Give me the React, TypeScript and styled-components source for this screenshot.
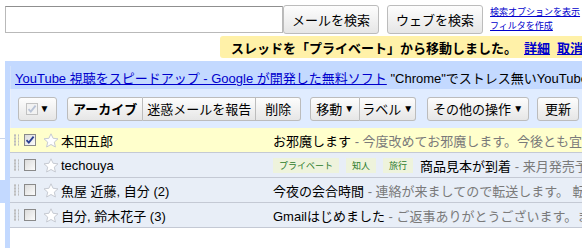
import React from 'react';
import styled, { createGlobalStyle } from 'styled-components';

const GlobalStyle = createGlobalStyle`
  body {
    margin: 0;
    background: #fff;
    font-family: "Liberation Sans", "Noto Sans CJK JP", sans-serif;
    font-size: 13px;
    color: #000;
    overflow: hidden;
  }
`;

const Page = styled.div`
  width: 582px;
  height: 248px;
  overflow: hidden;
`;

const TopBar = styled.div`
  display: flex;
  align-items: center;
  padding: 4px 0 0 5px;
  height: 30px;
`;

const SearchInput = styled.input`
  flex: none;
  width: 278px;
  height: 27px;
  box-sizing: border-box;
  border: 1px solid #b9b9b9;
  border-top-color: #8f8f8f;
  margin: 0;
`;

const Button = styled.button<{ $bold?: boolean; $pos?: 'left' | 'mid' | 'right'; $px?: string }>`
  display: inline-flex;
  align-items: center;
  justify-content: center;
  flex: none;
  box-sizing: border-box;
  height: 24px;
  padding: 0 ${(p) => p.$px ?? '6px'};
  margin: 0;
  font-family: inherit;
  font-size: 13px;
  font-weight: ${(p) => (p.$bold ? 'bold' : 'normal')};
  color: #000;
  white-space: nowrap;
  background: linear-gradient(#fdfdfd, #e6e6e6);
  border: 1px solid #bcbcbc;
  border-radius: ${(p) =>
    p.$pos === 'left' ? '3px 0 0 3px' : p.$pos === 'mid' ? '0' : p.$pos === 'right' ? '0 3px 3px 0' : '3px'};
  ${(p) => (p.$pos === 'mid' || p.$pos === 'right' ? 'border-left: none;' : '')}
`;

const SearchButton = styled(Button)`
  height: 29px;
  padding: 0 8px;
  font-size: 13px;
  margin-left: 0;
  & + & {
    margin-left: 8px;
  }
`;

const SearchLinks = styled.div`
  display: flex;
  flex-direction: column;
  gap: 3px;
  margin-left: 7px;
  font-size: 9px;
  line-height: 11px;
  white-space: nowrap;
`;

const Link = styled.a<{ $bold?: boolean }>`
  color: #0000cc;
  text-decoration: underline;
  font-weight: ${(p) => (p.$bold ? 'bold' : 'normal')};
`;

const NoticeRow = styled.div`
  display: flex;
  justify-content: flex-end;
  margin-top: 2px;
  height: 22px;
`;

const Notice = styled.div`
  display: flex;
  align-items: center;
  gap: 7px;
  width: 362px;
  box-sizing: border-box;
  padding: 0 0 0 11px;
  background: #fff1a8;
  border-radius: 3px 0 0 3px;
  font-weight: bold;
  font-size: 13px;
  white-space: nowrap;
  overflow: hidden;
`;

const Content = styled.div`
  display: flex;
  margin-top: 3px;
`;

const LeftNav = styled.div`
  width: 5px;
  flex: none;
  display: flex;
  flex-direction: column;
`;

const NavLine = styled.div<{ $top: number }>`
  margin-top: ${(p) => p.$top}px;
  height: 1px;
  background: #c8d4ec;
`;

const NavBlock = styled.div<{ $top: number }>`
  margin-top: ${(p) => p.$top}px;
  height: 23px;
  background: #c3d9ff;
`;

const Main = styled.div`
  flex: 1;
  min-width: 0;
  border-left: 5px solid #c3d9ff;
  height: 190px;
`;

const AdLine = styled.div`
  background: #c3d9ff;
  padding: 5px 0 0;
`;

const AdText = styled.div`
  height: 23px;
  display: flex;
  align-items: center;
  padding-left: 4px;
  border-left: 1px solid #d3e2fb;
  white-space: nowrap;
  overflow: hidden;
  font-size: 13px;
`;

const Toolbar = styled.div`
  display: flex;
  align-items: center;
  height: 39px;
  padding-left: 7px;
  background: #e0ecff;
  border-left: 1px solid #e8effb;
  white-space: nowrap;
  overflow: hidden;
`;

const Group = styled.div<{ $gap?: number }>`
  display: flex;
  margin-right: ${(p) => p.$gap ?? 9}px;
  flex: none;
`;

const Arrow = styled.span`
  font-size: 10px;
  margin-left: 2px;
`;

const Row = styled.div<{ $selected?: boolean }>`
  display: flex;
  align-items: center;
  height: 24px;
  border-bottom: 1px solid #c4c9d4;
  background: ${(p) => (p.$selected ? '#ffffcc' : '#e8eef7')};
  white-space: nowrap;
  overflow: hidden;
`;

const Handle = styled.div`
  width: 6px;
  height: 12px;
  margin-left: 3px;
  flex: none;
  background-image: radial-gradient(#bdbdbd 50%, transparent 51%);
  background-size: 4px 3px;
`;

const Box = styled.span<{ $faded?: boolean }>`
  position: relative;
  display: inline-block;
  box-sizing: border-box;
  width: 12px;
  height: 12px;
  flex: none;
  border: 1px solid ${(p) => (p.$faded ? '#c2c2c2' : '#8a8a8a')};
  background: ${(p) => (p.$faded ? '#f2f2f2' : 'linear-gradient(135deg, #dcdcdc, #fbfbfb)')};
`;

const RowBox = styled(Box)`
  margin-left: 5px;
`;

const Sender = styled.div`
  width: 212px;
  flex: none;
  padding-left: 2px;
  font-size: 13px;
`;

const Subject = styled.div`
  display: flex;
  align-items: center;
  font-size: 13px;
`;

const Snippet = styled.span`
  color: #7a7a7a;
`;

const Label = styled.span`
  display: inline-flex;
  align-items: center;
  flex: none;
  height: 15px;
  padding: 0 6px;
  margin-right: 7px;
  background: #eef3dc;
  color: #2a7a2a;
  font-size: 9px;
`;

const Check = ({ color }: { color: string }) => (
  <svg width="10" height="10" viewBox="0 0 10 10" style={{ position: 'absolute', left: 0, top: 0 }}>
    <path d="M1.5 5.2 L3.8 7.6 L8.6 1.6" fill="none" stroke={color} strokeWidth="1.8" />
  </svg>
);

const Star = () => (
  <svg width="16" height="15" viewBox="0 0 16 15" style={{ marginLeft: 7, flex: 'none' }}>
    <path
      d="M8 0.8 L10.1 5.3 L15 5.8 L11.3 9.1 L12.4 14 L8 11.5 L3.6 14 L4.7 9.1 L1 5.8 L5.9 5.3 Z"
      fill="#fff"
      stroke="#c6cad2"
      strokeWidth="1"
    />
  </svg>
);

type Mail = {
  sender: string;
  subject: string;
  snippet: string;
  labels?: string[];
  selected?: boolean;
};

const mails: Mail[] = [
  { sender: '本田五郎', subject: 'お邪魔します', snippet: '今度改めてお邪魔します。今後とも宜しくお願いします', selected: true },
  { sender: 'techouya', subject: '商品見本が到着', snippet: '来月発売予定の商品', labels: ['プライベート', '知人', '旅行'] },
  { sender: '魚屋 近藤, 自分 (2)', subject: '今夜の会合時間', snippet: '連絡が来ましてので転送します。 転送' },
  { sender: '自分, 鈴木花子 (3)', subject: 'Gmailはじめました', snippet: 'ご返事ありがとうございます。まず' },
];

const App: React.FC = () => {
  return (
    <Page>
      <GlobalStyle />
      <TopBar>
        <SearchInput />
        <SearchButton>メールを検索</SearchButton>
        <SearchButton>ウェブを検索</SearchButton>
        <SearchLinks>
          <Link>検索オプションを表示</Link>
          <Link>フィルタを作成</Link>
        </SearchLinks>
      </TopBar>
      <NoticeRow>
        <Notice>
          <span>スレッドを「プライベート」から移動しました。</span>
          <Link $bold>詳細</Link>
          <Link $bold>取消</Link>
        </Notice>
      </NoticeRow>
      <Content>
        <LeftNav>
          <NavLine $top={77} />
          <NavBlock $top={41} />
        </LeftNav>
        <Main>
          <AdLine>
            <AdText>
              <Link>YouTube 視聴をスピードアップ - Google が開発した無料ソフト</Link>
              &nbsp;"Chrome"でストレス無いYouTube視聴を
            </AdText>
          </AdLine>
          <Toolbar>
            <Group $gap={10}>
              <Button style={{ width: 39, padding: 0 }}>
                <Box $faded>
                  <Check color="#b9c3d6" />
                </Box>
                <Arrow>▼</Arrow>
              </Button>
            </Group>
            <Group>
              <Button $bold $pos="left" $px="5px">アーカイブ</Button>
              <Button $pos="mid" $px="4px">迷惑メールを報告</Button>
              <Button $pos="right" $px="9px">削除</Button>
            </Group>
            <Group $gap={11}>
              <Button $pos="left" $px="5px">移動<Arrow>▼</Arrow></Button>
              <Button $pos="right" $px="2px">ラベル<Arrow>▼</Arrow></Button>
            </Group>
            <Group $gap={8}>
              <Button $px="5px">その他の操作<Arrow>▼</Arrow></Button>
            </Group>
            <Group>
              <Button $px="7px">更新</Button>
            </Group>
          </Toolbar>
          {mails.map((m) => (
            <Row key={m.sender} $selected={m.selected}>
              <Handle />
              <RowBox>{m.selected && <Check color="#2a3f8f" />}</RowBox>
              <Star />
              <Sender>{m.sender}</Sender>
              <Subject>
                {m.labels?.map((l) => <Label key={l}>{l}</Label>)}
                <span>
                  {m.subject} <Snippet>- {m.snippet}</Snippet>
                </span>
              </Subject>
            </Row>
          ))}
        </Main>
      </Content>
    </Page>
  );
};

export default App;
